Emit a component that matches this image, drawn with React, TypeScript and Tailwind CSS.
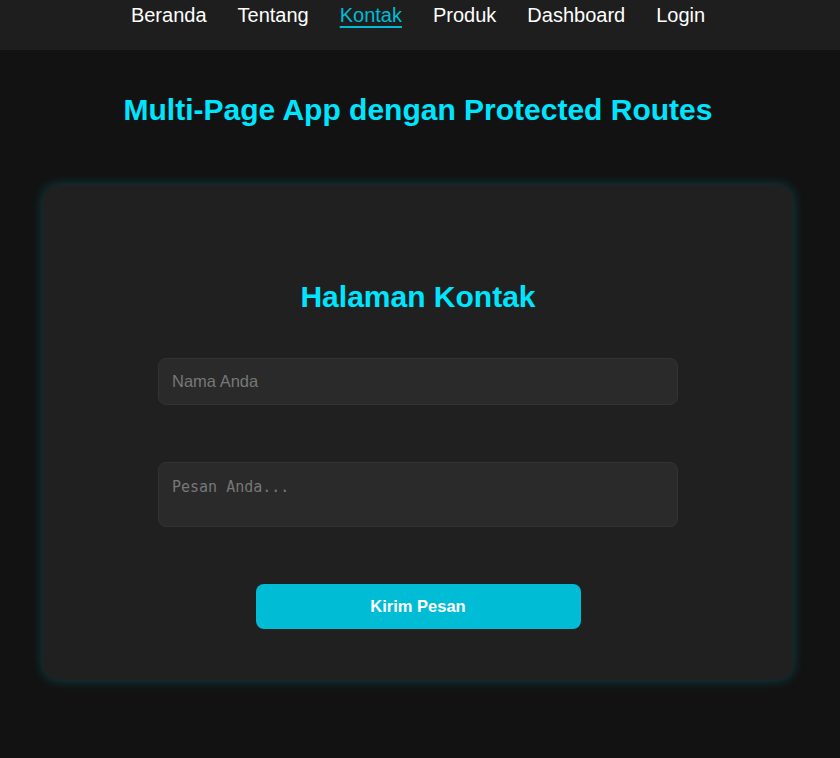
const links = ["Beranda", "Tentang", "Kontak", "Produk", "Dashboard", "Login"];

export default function App() {
  return (
    <div className="min-h-[758px] bg-[#121212] font-['Liberation_Sans',Arial,sans-serif] text-white">
      <nav className="h-[50px] bg-[#1e1e1e] pr-1">
        <ul className="flex justify-center gap-[31px] pt-[1px] text-[20px] leading-7">
          {links.map((l) => (
            <li key={l}>
              <a
                href="#"
                className={
                  l === "Kontak"
                    ? "text-[#00bcd4] underline underline-offset-[4px]"
                    : "text-white"
                }
              >
                {l}
              </a>
            </li>
          ))}
        </ul>
      </nav>

      <main className="pr-1">
        <h1 className="mt-[42px] text-center text-[30px] font-bold leading-9 text-[#00e5ff]">
          Multi-Page App dengan Protected Routes
        </h1>

        <section className="mx-auto mt-[57px] w-[750px] rounded-2xl bg-[#202020] px-[115px] pb-[51px] pt-[94px] shadow-[0_0_12px_rgba(0,188,212,0.3)]">
          <h2 className="text-center text-[30px] font-bold leading-9 text-[#00e5ff]">
            Halaman Kontak
          </h2>
          <form className="mt-[43px] flex flex-col items-center">
            <input
              type="text"
              placeholder="Nama Anda"
              className="h-[47px] w-[520px] rounded-lg border border-[#333] bg-[#2a2a2a] px-[13px] text-[16.5px] text-white outline-none placeholder:text-[#777]"
            />
            <textarea
              placeholder="Pesan Anda..."
              rows={2}
              className="mt-[57px] h-[65px] w-[520px] resize-none rounded-lg border border-[#333] bg-[#2a2a2a] px-[13px] pt-[14px] font-['DejaVu_Sans_Mono',monospace] text-[15px] leading-5 text-white outline-none placeholder:text-[#777]"
            />
            <button
              type="button"
              className="mt-[57px] h-[45px] w-[325px] rounded-lg bg-[#00bcd4] text-[16.5px] font-bold text-white"
            >
              Kirim Pesan
            </button>
          </form>
        </section>
      </main>
    </div>
  );
}
